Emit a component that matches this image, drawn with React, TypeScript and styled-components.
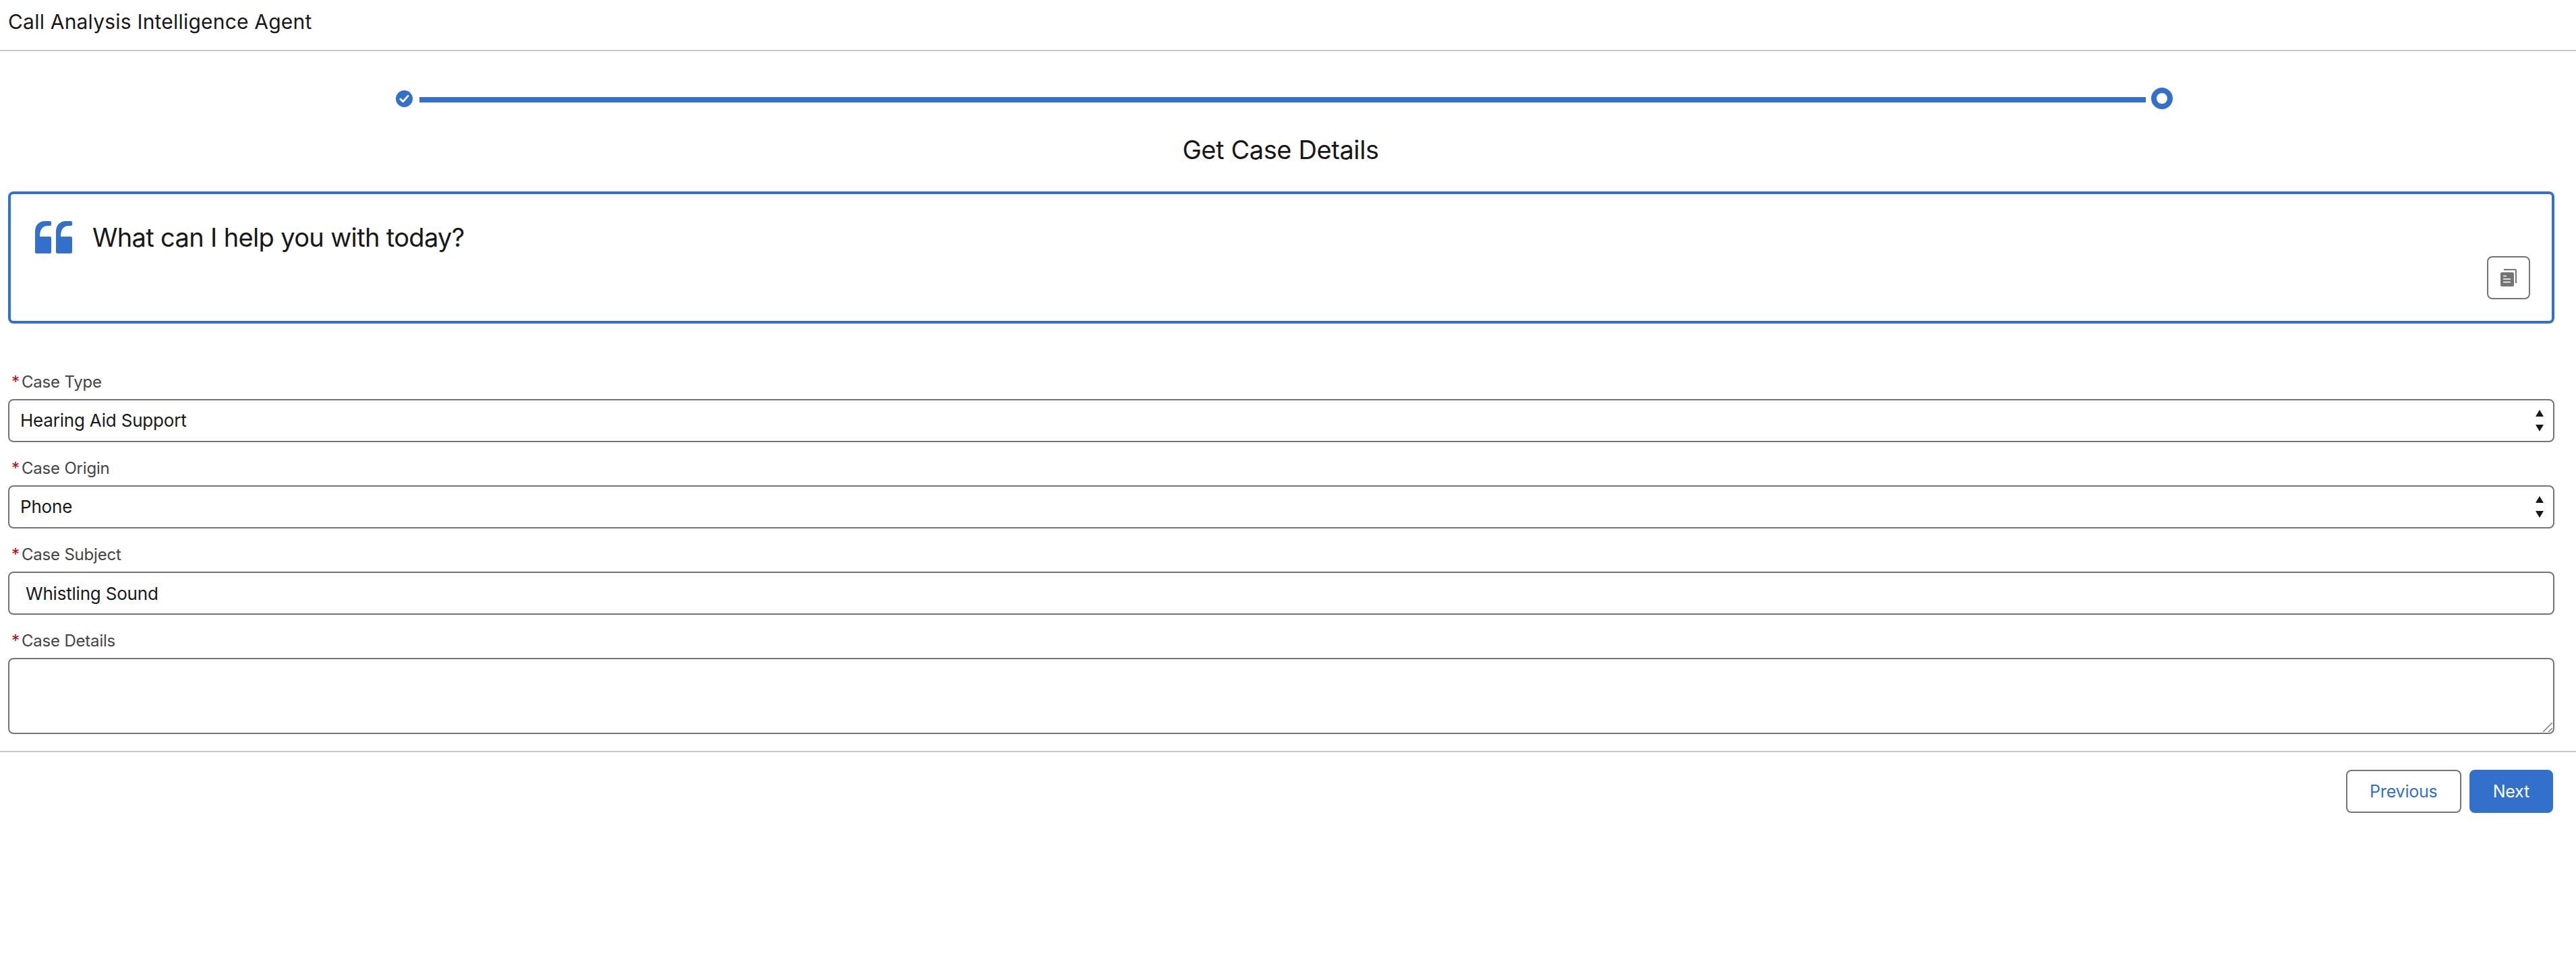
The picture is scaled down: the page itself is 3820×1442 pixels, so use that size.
import React from 'react';
import styled, { createGlobalStyle } from 'styled-components';

const BLUE = '#3270cc';
const BORDER = '#747474';
const RULE = '#c9c9c9';
const FONT = 'Inter, "Liberation Sans", sans-serif';

const GlobalStyle = createGlobalStyle`
  html, body {
    margin: 0;
    padding: 0;
    background: #fff;
    font-family: ${FONT};
    color: #181818;
  }
  * {
    box-sizing: border-box;
  }
`;

const Page = styled.div`
  width: 3820px;
  height: 1442px;
  background: #fff;
`;

const Header = styled.header`
  height: 76px;
  padding: 12px 12px 0;
  border-bottom: 2px solid ${RULE};
  font-size: 30px;
  letter-spacing: 0.2px;
  line-height: 40px;
`;

const Stepper = styled.div`
  display: flex;
  align-items: center;
  margin: 54px 0 0 587px;
  width: 2635px;
  height: 32px;
`;

const Done = styled.span`
  display: flex;
  flex: none;
  align-items: center;
  justify-content: center;
  width: 25px;
  height: 25px;
  border-radius: 50%;
  background: ${BLUE};
`;

const Bar = styled.span`
  flex: 1;
  height: 8px;
  margin: 4px 8px 0 10px;
  background: ${BLUE};
`;

const Current = styled.span`
  flex: none;
  width: 32px;
  height: 32px;
  border: 8px solid ${BLUE};
  border-radius: 50%;
  background: #fff;
`;

const Heading = styled.h2`
  margin: 35px 0 0;
  padding-right: 22px;
  font-size: 38px;
  font-weight: 400;
  letter-spacing: -0.4px;
  line-height: 50px;
  text-align: center;
`;

const Body = styled.main`
  padding: 0 32px 0 12px;
`;

const Prompt = styled.section`
  display: flex;
  justify-content: space-between;
  height: 196px;
  margin-top: 37px;
  padding: 40px 32px 32px 36px;
  border: 4px solid ${BLUE};
  border-radius: 8px;
`;

const Quote = styled.div`
  display: flex;
  gap: 29px;
  font-size: 38px;
  letter-spacing: -0.65px;
  line-height: 52px;
`;

const QuoteText = styled.span`
  margin-top: -2px;
`;

const CopyButton = styled.button`
  display: flex;
  align-items: center;
  justify-content: center;
  align-self: flex-end;
  width: 64px;
  height: 64px;
  padding: 0;
  border: 2px solid ${BORDER};
  border-radius: 8px;
  background: #fff;
`;

const Form = styled.form`
  display: flex;
  flex-direction: column;
  gap: 24px;
  margin-top: 72px;
`;

const Field = styled.div`
  display: flex;
  flex-direction: column;
`;

const Label = styled.label`
  display: flex;
  height: 40px;
  padding: 1px 0 0 5px;
  font-size: 24px;
  letter-spacing: -0.2px;
  line-height: 28px;
  color: #444;
`;

const Required = styled.abbr`
  width: 15px;
  color: #ba0517;
  text-decoration: none;
`;

const Select = styled.div`
  position: relative;
  height: 64px;
  border: 2px solid ${BORDER};
  border-radius: 8px;
  padding-left: 16px;
  font-size: 26px;
  letter-spacing: -0.2px;
  line-height: 60px;
`;

const SelectArrows = styled.svg`
  position: absolute;
  top: 14px;
  right: 14px;
`;

const TextInput = styled.input`
  display: block;
  width: 100%;
  height: 64px;
  padding: 0 24px;
  border: 2px solid ${BORDER};
  border-radius: 8px;
  font: 26px ${FONT};
  letter-spacing: -0.2px;
  color: #181818;
  outline: none;
`;

const TextAreaWrap = styled.div`
  position: relative;
  height: 113px;
`;

const TextArea = styled.textarea`
  display: block;
  width: 100%;
  height: 100%;
  padding: 8px 24px;
  border: 2px solid ${BORDER};
  border-radius: 8px;
  font: 26px ${FONT};
  resize: none;
  outline: none;
`;

const Grip = styled.svg`
  position: absolute;
  right: 3px;
  bottom: 3px;
`;

const Footer = styled.footer`
  display: flex;
  justify-content: flex-end;
  gap: 12px;
  margin-top: 25px;
  padding: 26px 34px 0 0;
  border-top: 2px solid ${RULE};
`;

const Button = styled.button<{ $primary?: boolean }>`
  height: 64px;
  padding: 0 33px;
  border: 2px solid ${(p) => (p.$primary ? BLUE : BORDER)};
  border-radius: 8px;
  background: ${(p) => (p.$primary ? BLUE : '#fff')};
  color: ${(p) => (p.$primary ? '#fff' : BLUE)};
  font: 25px ${FONT};
  letter-spacing: -0.2px;
`;

const Arrows = () => (
  <SelectArrows width="12" height="32" viewBox="0 0 12 32" fill="#181818">
    <path d="M6 0l6 10H0z" />
    <path d="M6 32l6-10H0z" />
  </SelectArrows>
);

const quoteMark =
  'M2 48a2 2 0 0 1-2-2V16C0 6 6 0 15 0h7a2 2 0 0 1 2 2v3a2 2 0 0 1-2 2h-3c-7 0-12 4-12 16h15a2 2 0 0 1 2 2v21a2 2 0 0 1-2 2z';

const App = () => (
  <Page>
    <GlobalStyle />
    <Header>Call Analysis Intelligence Agent</Header>

    <Stepper>
      <Done>
        <svg width="15" height="13" viewBox="0 0 16 14" fill="none">
          <path d="M2 7.5l4 4 8-9" stroke="#fff" strokeWidth="3" strokeLinecap="round" strokeLinejoin="round" />
        </svg>
      </Done>
      <Bar />
      <Current />
    </Stepper>

    <Heading>Get Case Details</Heading>

    <Body>
      <Prompt>
        <Quote>
          <svg width="56" height="48" viewBox="0 0 56 48" fill={BLUE}>
            <path d={quoteMark} />
            <path d={quoteMark} transform="translate(31)" />
          </svg>
          <QuoteText>What can I help you with today?</QuoteText>
        </Quote>
        <CopyButton type="button" aria-label="Copy">
          <svg width="24" height="26" viewBox="0 0 24 26">
            <path d="M5 0h17a2 2 0 0 1 2 2v19h-2V2H5z" fill={BORDER} />
            <rect x="0" y="5" width="20" height="21" rx="2" fill={BORDER} />
            <path d="M4 10.5h5M4 15h11M4 19.5h11" stroke="#fff" strokeWidth="1.6" />
          </svg>
        </CopyButton>
      </Prompt>

      <Form>
        <Field>
          <Label><Required>*</Required>Case Type</Label>
          <Select>Hearing Aid Support<Arrows /></Select>
        </Field>
        <Field>
          <Label><Required>*</Required>Case Origin</Label>
          <Select>Phone<Arrows /></Select>
        </Field>
        <Field>
          <Label><Required>*</Required>Case Subject</Label>
          <TextInput defaultValue="Whistling Sound" />
        </Field>
        <Field>
          <Label><Required>*</Required>Case Details</Label>
          <TextAreaWrap>
            <TextArea />
            <Grip width="14" height="14" viewBox="0 0 14 14" stroke={BORDER} strokeWidth="1.4">
              <path d="M0 14L14 0M8 14l6-6" />
            </Grip>
          </TextAreaWrap>
        </Field>
      </Form>
    </Body>

    <Footer>
      <Button type="button">Previous</Button>
      <Button type="button" $primary>Next</Button>
    </Footer>
  </Page>
);

export default App;
